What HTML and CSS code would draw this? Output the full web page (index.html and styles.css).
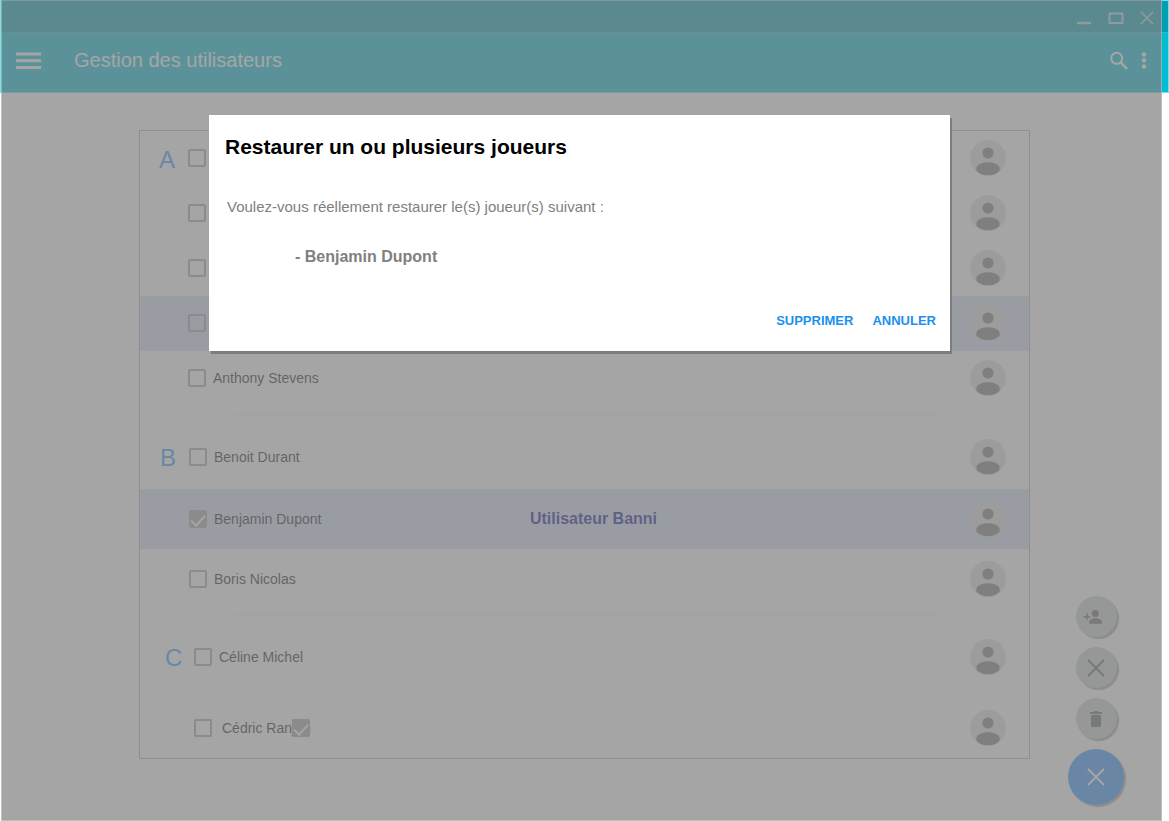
FILE: index.html
```html
<!DOCTYPE html>
<html lang="fr">
<head>
<meta charset="utf-8">
<meta name="viewport" content="width=device-width, initial-scale=1">
<title>Gestion des utilisateurs</title>
<link rel="stylesheet" href="styles.css">
</head>
<body>
<svg class="sprite" aria-hidden="true">
  <symbol id="avatar" viewBox="0 0 36 36">
    <circle cx="18" cy="18" r="18" fill="#e1e1e1"/>
    <circle cx="18" cy="13" r="5.6" fill="#7c7c7c"/>
    <path d="M6.400 27C8.500 23.800 12.500 22.200 18 22.200S27.500 23.800 29.600 27v3.500C27.500 33.700 23.500 35.300 18 35.300S8.500 33.700 6.400 30.500z" fill="#7c7c7c"/>
  </symbol>
  <symbol id="cross" viewBox="0 0 18 18">
    <path d="M1 1L17 17M17 1L1 17" fill="none" stroke="currentColor" stroke-width="2"/>
  </symbol>
</svg>

<header>
  <div class="titlebar">
    <button class="win" aria-label="Réduire"><svg width="16" height="14" viewBox="0 0 16 14"><path d="M1 12h14" stroke="currentColor" stroke-width="2.500"/></svg></button>
    <button class="win" aria-label="Agrandir"><svg width="16" height="14" viewBox="0 0 16 14"><path d="M1.500 2.500h13v9.500h-13z" fill="none" stroke="currentColor" stroke-width="2"/></svg></button>
    <button class="win" aria-label="Fermer"><svg width="14" height="14"><use href="#cross"/></svg></button>
  </div>
  <div class="appbar">
    <button class="icon-btn" aria-label="Menu"><svg width="26" height="18" viewBox="0 0 26 18"><path d="M0 2h25M0 8.800h25M0 15.500h25" stroke="currentColor" stroke-width="3"/></svg></button>
    <h1>Gestion des utilisateurs</h1>
    <button class="icon-btn" aria-label="Rechercher"><svg width="18" height="20" viewBox="0 0 18 20"><circle cx="6.700" cy="7.300" r="5.500" fill="none" stroke="currentColor" stroke-width="2"/><path d="M10.700 11.300L17 17.800" stroke="currentColor" stroke-width="2.500"/></svg></button>
    <button class="icon-btn" aria-label="Plus d'options"><svg width="6" height="18" viewBox="0 0 6 18" fill="currentColor"><circle cx="3" cy="2.500" r="2.200"/><circle cx="3" cy="8.500" r="2.200"/><circle cx="3" cy="14.500" r="2.200"/></svg></button>
  </div>
</header>

<main>
  <section class="group group-a">
    <div class="row"><span class="letter">A</span><input type="checkbox" aria-label="Joueur 1"><svg class="avatar"><use href="#avatar"/></svg></div>
    <div class="row"><span class="letter"></span><input type="checkbox" aria-label="Joueur 2"><svg class="avatar"><use href="#avatar"/></svg></div>
    <div class="row"><span class="letter"></span><input type="checkbox" aria-label="Joueur 3"><svg class="avatar"><use href="#avatar"/></svg></div>
    <div class="row banned"><span class="letter"></span><input type="checkbox" aria-label="Joueur 4"><svg class="avatar"><use href="#avatar"/></svg></div>
    <div class="row"><span class="letter"></span><input type="checkbox" id="u5"><label for="u5">Anthony Stevens</label><svg class="avatar"><use href="#avatar"/></svg></div>
  </section>
  <section class="group group-b">
    <div class="row"><span class="letter">B</span><input type="checkbox" id="u6"><label for="u6">Benoit Durant</label><svg class="avatar"><use href="#avatar"/></svg></div>
    <div class="row banned"><span class="letter"></span><input type="checkbox" id="u7" checked><label for="u7">Benjamin Dupont</label><strong class="status">Utilisateur Banni</strong><svg class="avatar"><use href="#avatar"/></svg></div>
    <div class="row"><span class="letter"></span><input type="checkbox" id="u8"><label for="u8">Boris Nicolas</label><svg class="avatar"><use href="#avatar"/></svg></div>
  </section>
  <section class="group group-c">
    <div class="row"><span class="letter">C</span><input type="checkbox" id="u9"><label for="u9">Céline Michel</label><svg class="avatar"><use href="#avatar"/></svg></div>
    <div class="row"><span class="letter"></span><input type="checkbox" id="u10"><label for="u10" class="tagged">Cédric Ranjon<input type="checkbox" class="floating" aria-label="Sélection" checked></label><svg class="avatar"><use href="#avatar"/></svg></div>
  </section>
</main>

<nav class="actions" aria-label="Actions">
  <button class="fab" aria-label="Ajouter un joueur"><svg width="26" height="16" viewBox="0 0 26 16" fill="currentColor"><path d="M3.200 4.200h1.500v2.700h2.500v1.500H4.700v2.700H3.200V8.400H.5V6.900h2.700z"/><circle cx="12.300" cy="4.500" r="3.500"/><path d="M6 14.800v-1.600c0-2.500 3.500-4 6.500-4s6.500 1.500 6.500 4v1.600z"/></svg></button>
  <button class="fab" aria-label="Bannir"><svg width="18" height="18"><use href="#cross"/></svg></button>
  <button class="fab" aria-label="Supprimer"><svg width="14" height="18" viewBox="0 0 14 18" fill="currentColor"><path d="M1 2h3.500l1-1h3l1 1H13v2H1zM2 5h10v10.500Q12 17 10.500 17h-7Q2 17 2 15.500z"/></svg></button>
  <button class="fab fab-main" aria-label="Fermer le menu"><svg width="18" height="18"><use href="#cross"/></svg></button>
</nav>

<div class="overlay">
  <div class="dialog" role="dialog" aria-labelledby="dialog-title">
    <h2 id="dialog-title">Restaurer un ou plusieurs joueurs</h2>
    <p class="question">Voulez-vous réellement restaurer le(s) joueur(s) suivant :</p>
    <p class="player">- Benjamin Dupont</p>
    <div class="choices">
      <button>SUPPRIMER</button>
      <button>ANNULER</button>
    </div>
  </div>
</div>
</body>
</html>
```

FILE: styles.css
```css
* { box-sizing: border-box; }

body {
  margin: 0;
  min-height: 100vh;
  position: relative;
  background: #fff;
  color: #1c1c1c;
  font-family: "Liberation Sans", Arial, sans-serif;
  font-size: 14px;
}

button {
  display: flex;
  align-items: center;
  justify-content: center;
  padding: 0;
  border: 0;
  background: none;
  color: inherit;
  font: inherit;
}

h1, h2, p { margin: 0; }
svg { display: block; flex: none; }
.sprite { position: absolute; width: 0; height: 0; }

header {
  color: #fff;
  border: 1px solid #7adfe9;
  background: #00bcd4;
}

.titlebar {
  display: flex;
  justify-content: flex-end;
  align-items: center;
  gap: 16px;
  height: 32px;
  padding: 2px 14px 0;
  background: #009fb5;
  border-bottom: 1px solid #35b7c6;
}

.win { color: #b4dadf; }

.appbar {
  display: flex;
  align-items: center;
  gap: 13px;
  height: 59px;
  padding: 0 21px 4px 15px;
}

.appbar h1 {
  flex: 1;
  margin-left: 19px;
  font-size: 20px;
  font-weight: 400;
}

main {
  margin: 37px 139px 0;
  border: 1px solid #b4b4b4;
}

.group + .group::before {
  content: "";
  display: block;
  margin: 8px 92px 10px 94px;
  border-top: 1px solid #ededed;
}

.group-c.group::before { margin-top: 5px; margin-bottom: 12px; }

.row {
  display: flex;
  align-items: center;
  gap: 7px;
  height: 55px;
  padding: 0 23px 1px 19px;
  position: relative;
}

.group-b .row { height: 60px; padding-left: 20px; }
.group-b .row:first-of-type { height: 64px; }
.group-c .row { height: 60px; padding-left: 25px; }
.group-c .row + .row { margin-top: 11px; }

.banned { background: #d8e1fc; }

.letter {
  width: 22px;
  padding-top: 3px;
  color: #3399ff;
  font-size: 24px;
}

input[type="checkbox"] {
  appearance: none;
  flex: none;
  display: grid;
  place-items: center;
  width: 18px;
  height: 18px;
  margin: 0;
  border: 2px solid #a4a4a4;
  border-radius: 2px;
}

input[type="checkbox"]:checked { background: #a4a4a4; }

input[type="checkbox"]:checked::after {
  content: "";
  width: 6px;
  height: 12px;
  margin-bottom: 4px;
  border: solid #fff;
  border-width: 0 2px 2px 0;
  transform: rotate(42deg);
}

.tagged { position: relative; margin-left: 3px; }

input.floating {
  position: absolute;
  right: 1px;
  top: -1px;
}

.status {
  position: absolute;
  left: 0;
  right: 0;
  padding-left: 18px;
  text-align: center;
  color: #14148c;
  font-size: 16px;
}

.avatar { width: 36px; height: 36px; margin-left: auto; }

.actions {
  position: absolute;
  right: 45px;
  bottom: 16px;
  display: flex;
  flex-direction: column;
  align-items: center;
  gap: 10px;
}

.fab {
  width: 41px;
  height: 41px;
  border-radius: 50%;
  background: #c8d1cc;
  color: #686868;
  box-shadow: 2px 2px 1px #a8a8a8;
}

.fab-main {
  width: 56px;
  height: 56px;
  background: #3399ff;
  color: #fff;
}

.overlay {
  position: absolute;
  inset: 0 7px 0 1px;
  display: flex;
  justify-content: center;
  align-items: flex-start;
  padding: 114px 20px 16px 16px;
  border: 1px solid rgba(255, 255, 255, 0.3);
  border-top: 1px solid transparent;
  background: rgba(128, 128, 128, 0.71);
}

.dialog {
  width: 100%;
  max-width: 741px;
  padding: 20px 14px 20px 16px;
  background: #fff;
  color: #808080;
  box-shadow: 2px 3px 0 #7d7d7d;
}

.dialog h2 {
  color: #000;
  font-size: 21px;
  line-height: 24px;
}

.question {
  margin: 38px 0 0 2px;
  font-size: 15px;
  line-height: 20px;
}

.player {
  margin: 30px 0 0 70px;
  font-size: 16px;
  font-weight: 700;
  line-height: 20px;
}

.choices {
  display: flex;
  justify-content: flex-end;
  gap: 19px;
  margin-top: 44px;
  color: #1b8ff0;
  font-size: 13px;
  font-weight: 700;
  line-height: 20px;
}
```
